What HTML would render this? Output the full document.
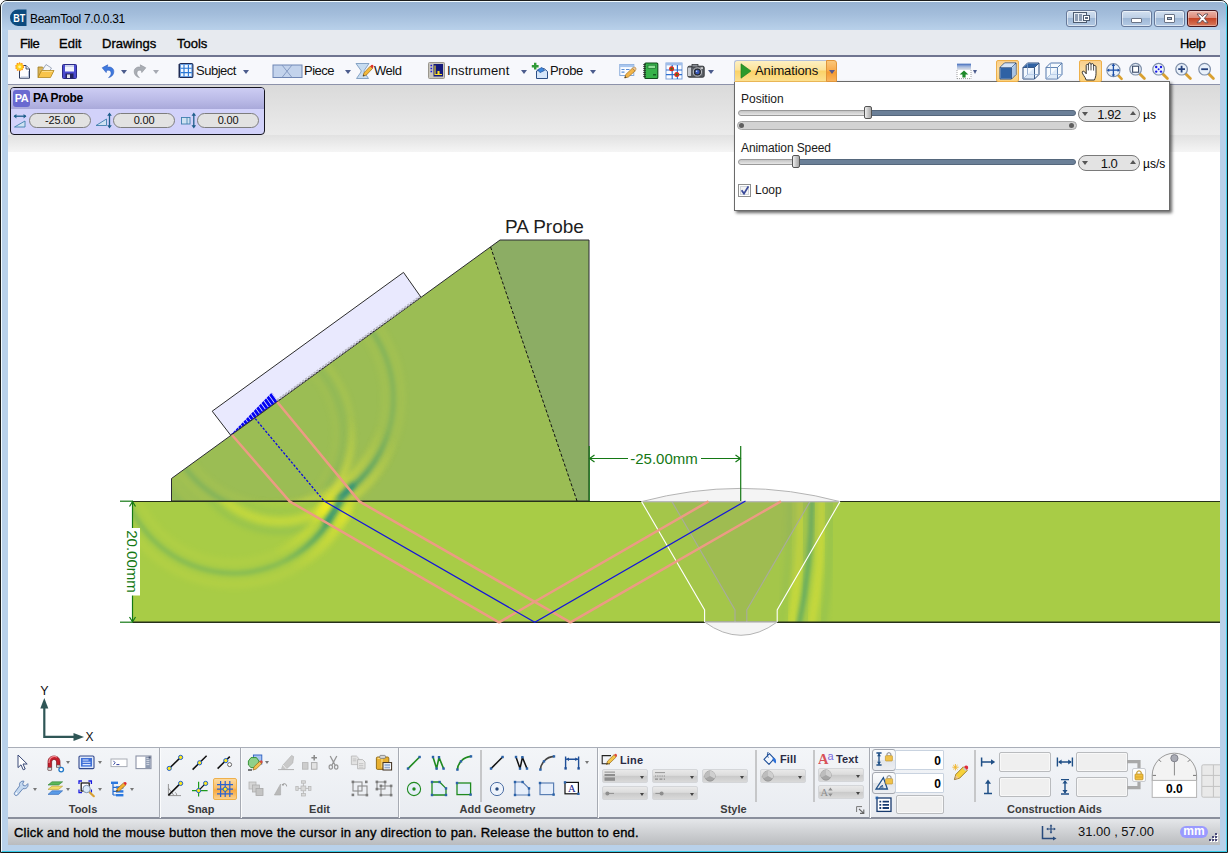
<!DOCTYPE html>
<html><head><meta charset="utf-8"><title>BeamTool 7.0.0.31</title>
<style>
*{box-sizing:border-box;margin:0;padding:0}
html,body{width:1228px;height:853px;overflow:hidden;background:#fff}
body{font-family:"Liberation Sans",sans-serif;font-size:12px;color:#000;position:relative}
.abs{position:absolute}
#frame{left:0;top:0;width:1228px;height:853px;background:#b9d1ea;border:1px solid #1c1c1c;border-radius:7px 7px 0 0;overflow:hidden}
#frame2{left:1px;top:1px;width:1226px;height:851px;border:1px solid #f2fbff;border-right-color:#4ad2ec;border-bottom-color:#35cbe8;border-radius:6px 6px 0 0;background:linear-gradient(#98b3d3 0px,#a3bddb 12px,#bad2eb 29px,#b9d1ea 30px)}
#title{left:30px;top:11px;font-size:12px;letter-spacing:-0.3px;line-height:16px;white-space:nowrap}
#menubar{left:8px;top:30px;width:1212px;height:27px;background:#e7eaef;border-bottom:2px solid #6f7490}
.mi{top:36px;font-size:13px;line-height:16px;-webkit-text-stroke:0.35px #000;white-space:nowrap}
#toolbar{left:8px;top:57px;width:1212px;height:28px;background:#f7f8fc;border-bottom:1px solid #8d92aa}
.tt{top:63px;font-size:13px;line-height:16px;white-space:nowrap;color:#111}
#gray{left:8px;top:85px;width:1212px;height:67px;background:linear-gradient(#dadada 0,#ebebeb 50px,#e1e1e1 50px,#f5f5f5 67px)}
#canvas{left:8px;top:152px;width:1212px;height:595px;background:#fff}
#ribbon{left:8px;top:747px;width:1212px;height:72px;background:linear-gradient(#f3f5f8,#e9ecf1);border-top:1px solid #a9aeb8;border-bottom:2px solid #8a8f9c}
#status{left:8px;top:819px;width:1212px;height:26px;background:linear-gradient(#e5e7ea,#cfd1d4 50%,#babcbf)}
</style></head><body>
<div id="frame" class="abs"></div><div id="frame2" class="abs"></div>
<div id="title" class="abs">BeamTool 7.0.0.31</div>
<div id="menubar" class="abs"></div>
<div class="abs mi" style="left:20px;letter-spacing:-0.4px">File</div>
<div class="abs mi" style="left:59px">Edit</div>
<div class="abs mi" style="left:102px">Drawings</div>
<div class="abs mi" style="left:177px">Tools</div>
<div class="abs mi" style="left:1180px;letter-spacing:-0.3px">Help</div>
<div id="toolbar" class="abs"></div>
<div id="gray" class="abs"></div>
<div id="canvas" class="abs">
<svg class="abs" style="left:0;top:0" width="1212" height="595" viewBox="8 152 1212 595">
<defs>
<filter id="b1" x="-20%" y="-20%" width="140%" height="140%"><feGaussianBlur stdDeviation="2"/></filter>
<filter id="b2" x="-20%" y="-20%" width="140%" height="140%"><feGaussianBlur stdDeviation="3"/></filter>
<filter id="b3" x="-50%" y="-50%" width="200%" height="200%"><feGaussianBlur stdDeviation="4"/></filter>
<clipPath id="cw"><polygon points="171.5,501 171.5,478.5 500,240 589,240 589,501"/></clipPath>
<clipPath id="cp"><rect x="133" y="501" width="1087" height="121"/></clipPath>
<clipPath id="cel"><polygon points="230.5,435 277.6,401 271.8,392.6"/></clipPath>
<radialGradient id="hot" gradientUnits="userSpaceOnUse" cx="338" cy="498" r="85"><stop offset="0" stop-color="#fff"/><stop offset="0.35" stop-color="#fff" stop-opacity="0.75"/><stop offset="1" stop-color="#fff" stop-opacity="0"/></radialGradient>
<mask id="mhot"><rect x="100" y="200" width="600" height="450" fill="url(#hot)"/></mask>
</defs>
<!-- plate -->
<rect x="133" y="501" width="1087" height="121" fill="#a8cc46"/>
<!-- wedge -->
<polygon points="171.5,501 171.5,478.5 500,240 589,240 589,501" fill="#9bbd54"/>
<polygon points="490.6,247 500,240 589,240 589,501 577,501" fill="#8cad64"/>
<!-- WAVES -->
<g clip-path="url(#cw)">
 <g opacity="0.3">
  <circle cx="277.7" cy="398.4" r="115.8" fill="none" stroke="#3f9a72" stroke-width="4" filter="url(#b1)"/>
  <circle cx="277.7" cy="398.4" r="124" fill="none" stroke="#d4dc48" stroke-width="5" filter="url(#b2)" opacity="0.7"/>
  <circle cx="277.7" cy="398.4" r="107.5" fill="none" stroke="#d4dc48" stroke-width="5" filter="url(#b2)" opacity="0.6"/>
  <circle cx="247.6" cy="433.8" r="104.1" fill="none" stroke="#d8de46" stroke-width="5" filter="url(#b2)" opacity="0.9"/>
  <circle cx="247.6" cy="433.8" r="96.5" fill="none" stroke="#5aa270" stroke-width="4" filter="url(#b2)" opacity="0.8"/>
  <circle cx="247.6" cy="433.8" r="88" fill="none" stroke="#d4dc48" stroke-width="4" filter="url(#b2)" opacity="0.5"/>
 </g>
 <g mask="url(#mhot)" opacity="0.7">
  <circle cx="277.7" cy="398.4" r="115.8" fill="none" stroke="#2a9078" stroke-width="4.5" filter="url(#b1)"/>
  <circle cx="277.7" cy="398.4" r="124.5" fill="none" stroke="#e4e63a" stroke-width="5" filter="url(#b2)"/>
  <circle cx="277.7" cy="398.4" r="107" fill="none" stroke="#e4e63a" stroke-width="5" filter="url(#b2)"/>
  <circle cx="247.6" cy="433.8" r="104.1" fill="none" stroke="#e8e838" stroke-width="5" filter="url(#b2)"/>
 </g>
</g>
<g clip-path="url(#cp)">
 <g opacity="0.35">
  <circle cx="233.5" cy="459.5" r="113.7" fill="none" stroke="#3f9a72" stroke-width="4.5" filter="url(#b1)"/>
  <circle cx="233.5" cy="459.5" r="125" fill="none" stroke="#d6de40" stroke-width="7" filter="url(#b2)" opacity="0.75"/>
  <circle cx="233.5" cy="459.5" r="103" fill="none" stroke="#d6de40" stroke-width="6" filter="url(#b2)" opacity="0.6"/>
  <circle cx="279.7" cy="439.6" r="91.5" fill="none" stroke="#5aa66c" stroke-width="5" filter="url(#b2)" opacity="0.8"/>
  <circle cx="279.7" cy="439.6" r="72" fill="none" stroke="#5aa66c" stroke-width="5" filter="url(#b2)" opacity="0.5"/>
 </g>
 <g mask="url(#mhot)" opacity="0.7">
  <circle cx="233.5" cy="459.5" r="113.7" fill="none" stroke="#1f8a7c" stroke-width="5.5" filter="url(#b1)"/>
  <circle cx="233.5" cy="459.5" r="124" fill="none" stroke="#f0ec2c" stroke-width="7" filter="url(#b2)"/>
  <circle cx="233.5" cy="459.5" r="103" fill="none" stroke="#f2ee28" stroke-width="7" filter="url(#b2)"/>
 </g>
 <circle cx="279.7" cy="439.6" r="82" fill="none" stroke="#e2e636" stroke-width="7" filter="url(#b2)" opacity="0.55"/>
 <!-- right side reflected front -->
 <g>
  <path d="M812,498 Q812,562 798.5,626" fill="none" stroke="#4a9e6c" stroke-width="5" filter="url(#b1)" opacity="0.75"/>
  <path d="M800.5,498 Q802,562 790.5,626" fill="none" stroke="#dde234" stroke-width="6" filter="url(#b2)" opacity="0.8"/>
  <path d="M822,498 Q823,562 811,626" fill="none" stroke="#dde234" stroke-width="6" filter="url(#b2)" opacity="0.8"/>
  <path d="M831,498 Q832,562 823,626" fill="none" stroke="#6aae60" stroke-width="4" filter="url(#b2)" opacity="0.45"/>
  <path d="M790,498 Q790,562 781,626" fill="none" stroke="#6aae60" stroke-width="4" filter="url(#b2)" opacity="0.3"/>
 </g>
</g>
<g>
 <ellipse cx="328" cy="506" rx="6" ry="13" transform="rotate(38 328 506)" fill="#f6ee1c" filter="url(#b3)" opacity="0.85"/>
 <ellipse cx="343" cy="517" rx="4" ry="10" transform="rotate(38 343 517)" fill="#f0ea24" filter="url(#b3)" opacity="0.55"/>
 <path d="M354,484 Q343,496 337,505 Q331,514 325,524" fill="none" stroke="#1c8a82" stroke-width="5" filter="url(#b1)" opacity="0.7"/>
</g>

<polygon points="171.5,501 171.5,478.5 500,240 589,240 589,501" fill="none" stroke="#2b2b33" stroke-width="1"/>
<line x1="490.6" y1="247" x2="577" y2="501" stroke="#111" stroke-width="1" stroke-dasharray="3.2,2"/>
<line x1="133" y1="501.5" x2="1220" y2="501.5" stroke="#26301a" stroke-width="1.2"/>
<line x1="133" y1="622.3" x2="1220" y2="622.3" stroke="#26301a" stroke-width="1.4"/>
<!-- probe -->
<polygon points="403.5,272.4 420.9,297.1 230.5,435 212.2,411.2" fill="#e9e9fe" stroke="#2b2b2b" stroke-width="1"/>
<line x1="277" y1="400.2" x2="420" y2="296.6" stroke="#b9b9c4" stroke-width="2.2" stroke-dasharray="2.4,1.1"/>
<g clip-path="url(#cel)"><line x1="230.5" y1="435" x2="279" y2="399.9" stroke="#0404f4" stroke-width="30" stroke-dasharray="2.85,0.8"/></g>
<!-- weld -->
<path d="M641.6,501.6 Q741,475.2 840,501.6 Z" fill="#f4f4f4" stroke="#b4b4b4" stroke-width="1"/>
<path d="M704.6,622 Q741,648.6 777.2,622 Z" fill="#f4f4f4" stroke="#b4b4b4" stroke-width="1"/>
<polygon points="641.6,501.6 840,501.6 777.2,610 777.2,622 704.6,622 704.6,610" fill="#8c9c6c" fill-opacity="0.12"/>
<polygon points="672,501.6 810,501.6 746.8,610 746.8,622 735,622 735,610" fill="#8c9c6c" fill-opacity="0.22"/>
<polyline points="641.6,501.6 704.6,610 704.6,622" fill="none" stroke="#fff" stroke-width="1.1"/>
<polyline points="840,501.6 777.2,610 777.2,622" fill="none" stroke="#fff" stroke-width="1.1"/>
<polyline points="672,501.6 735,610 735,622" fill="none" stroke="#a9ab9e" stroke-width="1.1"/>
<polyline points="810,501.6 746.8,610 746.8,622" fill="none" stroke="#a9ab9e" stroke-width="1.1"/>
<line x1="643" y1="501.6" x2="839" y2="501.6" stroke="#b8b8b8" stroke-width="1.2"/>
<line x1="705" y1="622" x2="777" y2="622" stroke="#c4c4c4" stroke-width="1.2"/>
<!-- rays -->
<g fill="none" stroke="#ec9b84" stroke-width="2.5" stroke-linejoin="round">
<polyline points="232,435 289.6,501.4 499,622.3 708.5,501.4"/>
<polyline points="277.3,402 359.3,501.4 570.4,622.3 781,501.4"/>
</g>
<line x1="255.2" y1="418.6" x2="324" y2="501" stroke="#0a0ae0" stroke-width="1.3" stroke-dasharray="2.4,1.6"/>
<polyline points="324,501 534.8,622.3 745.5,501" fill="none" stroke="#1414dc" stroke-width="1.2"/>
<!-- dims -->
<g stroke="#147814" stroke-width="1.2" fill="none">
<line x1="589.2" y1="446" x2="589.2" y2="501"/><line x1="740.7" y1="446" x2="740.7" y2="501"/>
<line x1="589.5" y1="458.5" x2="628" y2="458.5"/><line x1="701" y1="458.5" x2="740.5" y2="458.5"/>
<polyline points="594.5,455 589.6,458.5 594.5,462"/><polyline points="735.5,455 740.4,458.5 735.5,462"/>
<line x1="120" y1="501.2" x2="133" y2="501.2"/><line x1="120" y1="622.2" x2="133" y2="622.2"/>
<line x1="132.5" y1="501" x2="132.5" y2="622"/>
<polyline points="129.5,506.5 132.5,501.6 135.5,506.5"/><polyline points="129.5,617 132.5,621.9 135.5,617"/>
</g>
<rect x="125" y="528" width="15" height="67.5" fill="#fff"/>
<text x="664" y="463.6" font-size="15" fill="#147814" text-anchor="middle" font-family="Liberation Sans, sans-serif">-25.00mm</text>
<text transform="translate(126.6,561.5) rotate(90)" font-size="15" fill="#147814" text-anchor="middle" font-family="Liberation Sans, sans-serif">20.00mm</text>
<text x="505" y="232.6" font-size="19" fill="#1e1e1e" font-family="Liberation Sans, sans-serif">PA Probe</text>
<!-- axes -->
<g stroke="#2f5656" stroke-width="2.2" fill="none"><polyline points="44.3,706 44.3,736.9 76,736.9"/></g>
<polygon points="44.3,698 48.3,708.5 40.3,708.5" fill="#2f5656"/><polygon points="84,736.9 73.5,732.9 73.5,740.9" fill="#2f5656"/>
<text x="44.5" y="695" font-size="12.5" text-anchor="middle" fill="#111" font-family="Liberation Sans, sans-serif">Y</text>
<text x="85.6" y="741" font-size="12" fill="#111" font-family="Liberation Sans, sans-serif">X</text>
</svg>

</div>
<div id="ribbon" class="abs"></div>
<div id="status" class="abs"></div>
<!-- probe panel -->
<div class="abs" style="left:10px;top:87px;width:255px;height:48px;border:1px solid #15151f;border-radius:4px;background:#d2d2fa;overflow:hidden"><div style="height:21px;background:linear-gradient(#cdcdf3,#b9b9e6 60%,#a9a9da)"></div></div>
<div class="abs" style="left:13px;top:90px;width:17px;height:17px;border-radius:3px;background:#6a6ad0;color:#fff;font-weight:bold;font-size:11px;line-height:17px;text-align:center;letter-spacing:-0.6px">PA</div>
<div class="abs" style="left:33px;top:91px;font-size:12px;font-weight:bold;line-height:15px;white-space:nowrap;color:#000;letter-spacing:-0.35px" id="paprobe">PA Probe</div>
<style>.pill{top:113px;height:15px;width:62px;border:1px solid #7d7d7d;border-radius:8px;background:#e2e2e2;font-size:11px;line-height:13px;text-align:center;color:#111;letter-spacing:-0.2px}</style>
<svg class="abs" style="left:13px;top:113px" width="15" height="15" viewBox="0 0 15 15"><path d="M1,3.2 H13" stroke="#1f5f8c" stroke-width="1.3"/><path d="M0.6,3.2 L3.4,1 V5.4Z M13.4,3.2 L10.6,1 V5.4Z" fill="#1f5f8c"/><path d="M1.5,14 L12,14 L12,8Z" fill="#cfe2f2" stroke="#3f7fae" stroke-width="0.9"/></svg>
<div class="abs pill" style="left:29px">-25.00</div>
<svg class="abs" style="left:95px;top:112px" width="18" height="17" viewBox="0 0 18 17"><path d="M1,13.5 L11.5,13.5 L11.5,7Z" fill="#cfe2f2" stroke="#3f7fae" stroke-width="0.9"/><path d="M14.5,2 V15" stroke="#1f5f8c" stroke-width="1.3"/><path d="M14.5,0.6 L12.2,3.8 H16.8Z M14.5,16.4 L12.2,13.2 H16.8Z" fill="#1f5f8c"/></svg>
<div class="abs pill" style="left:113px">0.00</div>
<svg class="abs" style="left:180px;top:112px" width="18" height="17" viewBox="0 0 18 17"><rect x="1.5" y="5.5" width="8.5" height="6.5" fill="#cfe2f2" stroke="#3f7fae" stroke-width="0.9"/><path d="M7,5.5 V12" stroke="#3f7fae" stroke-width="0.8"/><path d="M13.8,2 V15" stroke="#1f5f8c" stroke-width="1.3"/><path d="M13.8,0.6 L11.5,3.8 H16.1Z M13.8,16.4 L11.5,13.2 H16.1Z" fill="#1f5f8c"/></svg>
<div class="abs pill" style="left:197px">0.00</div>
<!-- popup -->
<div class="abs" style="left:734px;top:81px;width:436px;height:130px;background:#fff;border:1px solid #6a6a6a;box-shadow:2px 2px 3px rgba(0,0,0,.6)"></div>
<div class="abs" style="left:735px;top:80px;width:91px;height:2px;background:#fff"></div>
<div class="abs" style="left:741px;top:92px;font-size:12px;line-height:14px;color:#1a1a1a;white-space:nowrap" id="lpos">Position</div>
<style>.trk{height:6px;border-radius:3px}.trkl{background:linear-gradient(#c4c4c4,#e6e6e6);border:1px solid #9a9a9a}.trkd{background:#6b8098;border:1px solid #55677c}
.thumb{width:8px;height:13px;border:1px solid #555;border-radius:2px;background:linear-gradient(90deg,#f0f0f0,#c8c8c8 50%,#a8a8a8)}
.spin{width:62px;height:16px;border:1px solid #7a7a7a;border-radius:8px;background:#e3e3e3;font-size:13px;line-height:16px;text-align:center;color:#111;letter-spacing:-0.5px}
.sdn{width:0;height:0;border-left:3px solid transparent;border-right:3px solid transparent;border-top:4px solid #555}
.sup{width:0;height:0;border-left:3px solid transparent;border-right:3px solid transparent;border-bottom:4px solid #555}</style>
<div class="abs trk trkl" style="left:738px;top:110px;width:133px"></div>
<div class="abs trk trkd" style="left:869px;top:110px;width:207px"></div>
<div class="abs thumb" style="left:864px;top:106px"></div>
<div class="abs spin" style="left:1078px;top:106px">1.92</div>
<div class="abs sdn" style="left:1082px;top:112px"></div><div class="abs sup" style="left:1130px;top:111px"></div>
<div class="abs" style="left:1143px;top:108px;font-size:12px;line-height:14px;white-space:nowrap">µs</div>
<div class="abs" style="left:737px;top:121px;width:340px;height:9px;border:1px solid #a6a6a6;border-radius:5px;background:#d3d3d3"></div>
<div class="abs" style="left:739px;top:123px;width:5px;height:5px;border-radius:3px;background:#5f5f5f"></div>
<div class="abs" style="left:1069px;top:123px;width:5px;height:5px;border-radius:3px;background:#5f5f5f"></div>
<div class="abs" style="left:741px;top:141px;font-size:12px;line-height:14px;color:#1a1a1a;white-space:nowrap;letter-spacing:-0.1px" id="lspd">Animation Speed</div>
<div class="abs trk trkl" style="left:738px;top:159px;width:60px"></div>
<div class="abs trk trkd" style="left:797px;top:159px;width:279px"></div>
<div class="abs thumb" style="left:792px;top:155px"></div>
<div class="abs spin" style="left:1078px;top:155px">1.0</div>
<div class="abs sdn" style="left:1082px;top:161px"></div><div class="abs sup" style="left:1130px;top:160px"></div>
<div class="abs" style="left:1143px;top:157px;font-size:12px;line-height:14px;white-space:nowrap">µs/s</div>
<div class="abs" style="left:738px;top:184px;width:13px;height:13px;border:1px solid #8e8f8f;background:#f4f4f4;box-shadow:inset 0 0 0 1px #fff, inset 0 0 0 2px #cfd4da"></div>
<svg class="abs" style="left:740px;top:185px" width="10" height="11" viewBox="0 0 10 11"><path d="M1.6,5.2 L4,8.6 L8.4,1.4" stroke="#3a4a9a" stroke-width="1.8" fill="none"/></svg>
<div class="abs" style="left:755px;top:183px;font-size:12px;line-height:14px;color:#1a1a1a;white-space:nowrap">Loop</div>
<!-- status -->
<div class="abs" style="left:14px;top:825px;font-size:13px;line-height:16px;white-space:nowrap;-webkit-text-stroke:0.35px #000;letter-spacing:0.22px" id="stat">Click and hold the mouse button then move the cursor in any direction to pan. Release the button to end.</div>
<svg class="abs" style="left:1039px;top:823px" width="19" height="19" viewBox="0 0 19 19"><path d="M3.5,3 V15.5 H15" stroke="#274a7c" stroke-width="1.5" fill="none"/><path d="M17.5,15.5 L14,13.6 V17.4Z" fill="#274a7c"/><path d="M12,3 V9 M9,6 H15" stroke="#274a7c" stroke-width="1.2"/><path d="M12,1.2 L13.4,3.2 H10.6Z M12,10.8 L13.4,8.8 H10.6Z M7.2,6 L9.2,4.6 V7.4Z M16.8,6 L14.8,4.6 V7.4Z" fill="#274a7c"/></svg>
<div class="abs" style="left:1078px;top:824px;font-size:13px;line-height:16px;white-space:nowrap;color:#111" id="coord">31.00 , 57.00</div>
<div class="abs" style="left:1180px;top:826px;width:28px;height:12px;border-radius:6px;background:#9a9aff;color:#fff;font-weight:bold;font-size:12px;line-height:10.5px;text-align:center">mm</div>
<svg class="abs" style="left:1207px;top:832px" width="12" height="12" viewBox="0 0 12 12"><g fill="#fff"><rect x="9" y="2" width="2" height="2"/><rect x="6" y="5" width="2" height="2"/><rect x="9" y="5" width="2" height="2"/><rect x="3" y="8" width="2" height="2"/><rect x="6" y="8" width="2" height="2"/><rect x="9" y="8" width="2" height="2"/></g><g fill="#4a4a7a"><rect x="8" y="1" width="2" height="2"/><rect x="5" y="4" width="2" height="2"/><rect x="8" y="4" width="2" height="2"/><rect x="2" y="7" width="2" height="2"/><rect x="5" y="7" width="2" height="2"/><rect x="8" y="7" width="2" height="2"/></g></svg>
<style>.rsel{border:1px solid #eeb04a;border-radius:2px;background:linear-gradient(#fbd9a0,#f9bf6c 45%,#f7a840 55%,#fbd08a)}</style>
<div class="abs " style="left:159px;top:748px;width:1px;height:70px;background:#a7abb3"></div>
<div class="abs " style="left:160px;top:748px;width:1px;height:70px;background:#fbfcfd"></div>
<div class="abs " style="left:240px;top:748px;width:1px;height:70px;background:#a7abb3"></div>
<div class="abs " style="left:241px;top:748px;width:1px;height:70px;background:#fbfcfd"></div>
<div class="abs " style="left:398px;top:748px;width:1px;height:70px;background:#a7abb3"></div>
<div class="abs " style="left:399px;top:748px;width:1px;height:70px;background:#fbfcfd"></div>
<div class="abs " style="left:597px;top:748px;width:1px;height:70px;background:#a7abb3"></div>
<div class="abs " style="left:598px;top:748px;width:1px;height:70px;background:#fbfcfd"></div>
<div class="abs " style="left:869px;top:748px;width:1px;height:70px;background:#a7abb3"></div>
<div class="abs " style="left:870px;top:748px;width:1px;height:70px;background:#fbfcfd"></div>
<div class="abs " style="left:480px;top:750px;width:2px;height:52px;background:#c6c7c9"></div>
<div class="abs " style="left:755px;top:750px;width:2px;height:52px;background:#c6c7c9"></div>
<div class="abs " style="left:813px;top:750px;width:2px;height:52px;background:#c6c7c9"></div>
<div class="abs " style="left:974px;top:750px;width:2px;height:52px;background:#c6c7c9"></div>
<div class="abs " id="lb1" style="left:23px;top:802px;width:120px;text-align:center;font-size:11px;font-weight:bold;line-height:14px;color:#3c3c3c;white-space:nowrap">Tools</div>
<div class="abs " id="lb2" style="left:141px;top:802px;width:120px;text-align:center;font-size:11px;font-weight:bold;line-height:14px;color:#3c3c3c;white-space:nowrap">Snap</div>
<div class="abs " id="lb3" style="left:259.5px;top:802px;width:120px;text-align:center;font-size:11px;font-weight:bold;line-height:14px;color:#3c3c3c;white-space:nowrap">Edit</div>
<div class="abs " id="lb4" style="left:437.5px;top:802px;width:120px;text-align:center;font-size:11px;font-weight:bold;line-height:14px;color:#3c3c3c;white-space:nowrap">Add Geometry</div>
<div class="abs " id="lb5" style="left:673.5px;top:802px;width:120px;text-align:center;font-size:11px;font-weight:bold;line-height:14px;color:#3c3c3c;white-space:nowrap">Style</div>
<div class="abs " id="lb6" style="left:994.5px;top:802px;width:120px;text-align:center;font-size:11px;font-weight:bold;line-height:14px;color:#3c3c3c;white-space:nowrap">Construction Aids</div>
<svg class="abs" style="left:17px;top:754px" width="12" height="17" viewBox="0 0 12 17"><path d="M1,1 V13.6 L4,10.8 L6.2,15.8 L8.2,15 L6,10 H10.2Z" fill="#fff" stroke="#3a4a78" stroke-width="1"/></svg>
<svg class="abs" style="left:46px;top:754px" width="19" height="19" viewBox="0 0 19 19"><path d="M2,16 V8 C2,0 14,0 14,8 V13 H10.6 V8 C10.6,4.6 5.6,4.6 5.6,8 V16Z" fill="#c41e2c" stroke="#7a0f18" stroke-width="0.7"/><path d="M3,9 C3,2 9,1.6 11,3.4" stroke="#f08a90" stroke-width="1.2" fill="none"/><rect x="2" y="13.6" width="3.6" height="2.6" fill="#d8d8d8" stroke="#555" stroke-width="0.5"/><rect x="10.6" y="11" width="3.4" height="2.2" fill="#d8d8d8" stroke="#555" stroke-width="0.5"/><circle cx="15.2" cy="15.6" r="2.3" fill="#fff" stroke="#1f78c8" stroke-width="1.3"/></svg>
<div class="abs" style="left:65.5px;top:761px;width:0;height:0;border-left:2.5px solid transparent;border-right:2.5px solid transparent;border-top:3.5px solid #777"></div>
<svg class="abs" style="left:78px;top:755px" width="17" height="15" viewBox="0 0 17 15"><rect x="1" y="1" width="15" height="12.6" rx="1.2" fill="#dfe9fb" stroke="#33498c" stroke-width="1.1"/><rect x="3" y="3" width="11" height="8.6" fill="#3f6fd8"/><path d="M4.6,5 H10.5 M4.6,7.3 H12.4 M4.6,9.6 H12.4" stroke="#dfe9ff" stroke-width="1.1"/></svg>
<div class="abs" style="left:97.5px;top:761px;width:0;height:0;border-left:2.5px solid transparent;border-right:2.5px solid transparent;border-top:3.5px solid #777"></div>
<svg class="abs" style="left:110px;top:758px" width="18" height="10" viewBox="0 0 18 10"><rect x="1" y="1" width="16" height="7.6" fill="#fff" stroke="#a9adb6" stroke-width="1"/><path d="M3.4,2.8 L5.2,4.8 L3.4,6.8" stroke="#2a3a9a" stroke-width="0.9" fill="none"/><path d="M6.4,6.6 H9.4" stroke="#2a3a9a" stroke-width="1"/></svg>
<svg class="abs" style="left:135px;top:755px" width="17" height="15" viewBox="0 0 17 15"><rect x="1" y="1" width="15" height="12.6" fill="#fff" stroke="#8c93a6" stroke-width="1.1"/><rect x="10.4" y="1.5" width="5.2" height="11.6" fill="#8f9bb2"/><path d="M11.4,3.6 h3 M11.4,5.6 h3 M11.4,7.6 h3 M11.4,9.6 h3" stroke="#e6e9f0" stroke-width="0.8"/><rect x="13.6" y="1.5" width="2" height="2" fill="#55607a"/></svg>
<svg class="abs" style="left:13px;top:780px" width="18" height="17" viewBox="0 0 18 17"><path d="M11,1.2 C8.2,0.6 5.8,2.8 6.6,5.8 L1.6,12.6 C0.4,14.6 2.8,16.6 4.6,15 L10,8.6 C13.4,9.4 15.8,6.6 14.8,3.6 L12.4,6 L10.2,5.4 L9.8,3.4Z" fill="#c5d9f0" stroke="#5d7eb0" stroke-width="0.9" stroke-linejoin="round"/><circle cx="3.4" cy="13.4" r="0.9" fill="#fff"/></svg>
<div class="abs" style="left:33px;top:788px;width:0;height:0;border-left:2.5px solid transparent;border-right:2.5px solid transparent;border-top:3.5px solid #777"></div>
<svg class="abs" style="left:47px;top:781px" width="17" height="15" viewBox="0 0 17 15"><path d="M5,0.8 H15.6 L11.6,4 H1Z" fill="#5cb85a" stroke="#2e7d32" stroke-width="0.6"/><path d="M5,5.2 H15.6 L11.6,8.4 H1Z" fill="#f4dc6a" stroke="#b89a22" stroke-width="0.6"/><path d="M5,9.8 H15.6 L11.6,13.4 H1Z" fill="#5a9be8" stroke="#2a62b4" stroke-width="0.6"/></svg>
<div class="abs" style="left:65.5px;top:788px;width:0;height:0;border-left:2.5px solid transparent;border-right:2.5px solid transparent;border-top:3.5px solid #777"></div>
<svg class="abs" style="left:78px;top:780px" width="18" height="18" viewBox="0 0 18 18"><path d="M1,4 V1 H4 M10.4,1 H13.4 V4 M13.4,9.6 V12.6 M4,12.6 H1 V9.6" stroke="#1a1ae0" stroke-width="1.3" fill="none"/><rect x="3.2" y="3" width="8" height="8" fill="#fff" stroke="#111" stroke-width="1.2"/><path d="M11.6,12.2 L15.8,16.2" stroke="#d9a030" stroke-width="2.2" stroke-linecap="round"/><circle cx="8.6" cy="9" r="3.7" fill="#dcebfa" stroke="#8194b0" stroke-width="1"/></svg>
<div class="abs" style="left:97.5px;top:788px;width:0;height:0;border-left:2.5px solid transparent;border-right:2.5px solid transparent;border-top:3.5px solid #777"></div>
<svg class="abs" style="left:110px;top:781px" width="18" height="17" viewBox="0 0 18 17"><path d="M3,1 V14 M3,6.4 H6 M3,10.4 H6 M3,14 H6" stroke="#1f68d0" stroke-width="1.2" fill="none"/><rect x="1" y="0.6" width="7" height="2.4" fill="#2a78e0"/><rect x="6" y="5.2" width="7.4" height="2.4" fill="#2a78e0"/><rect x="6" y="9.2" width="7.4" height="2.4" fill="#2a78e0"/><rect x="6" y="13" width="7.4" height="2.4" fill="#2a78e0"/><path d="M6.4,10.6 L7.4,7.6 L13.4,2 L15.6,4.2 L9.6,9.8Z" fill="#f3b030" stroke="#8a5a10" stroke-width="0.6"/><path d="M13.4,2 L14.6,1 Q16,0.8 16.6,2 Q16.8,3.2 15.6,4.2Z" fill="#e0282a"/><path d="M6.4,10.6 L6.9,9 L8,10Z" fill="#222"/></svg>
<div class="abs" style="left:129.5px;top:788px;width:0;height:0;border-left:2.5px solid transparent;border-right:2.5px solid transparent;border-top:3.5px solid #777"></div>
<svg class="abs" style="left:166px;top:754px" width="18" height="18" viewBox="0 0 18 18"><path d="M3,14.6 L14.6,3.4" stroke="#111" stroke-width="1.5"/><circle cx="3.2" cy="14.4" r="2.1" fill="#ffe81a" stroke="#1f5fd0" stroke-width="1"/><circle cx="14.6" cy="3.4" r="2.1" fill="#ffe81a" stroke="#1f5fd0" stroke-width="1"/></svg>
<svg class="abs" style="left:191px;top:754px" width="18" height="18" viewBox="0 0 18 18"><path d="M1.6,15.6 L15.6,1.8" stroke="#111" stroke-width="1.5"/><circle cx="8.6" cy="8.8" r="2.1" fill="#ffe81a" stroke="#1f5fd0" stroke-width="1"/></svg>
<svg class="abs" style="left:216px;top:754px" width="18" height="18" viewBox="0 0 18 18"><path d="M1.6,14.6 L13.8,2.6" stroke="#111" stroke-width="1.5"/><circle cx="9.8" cy="6.6" r="2.1" fill="#ffe81a" stroke="#1f5fd0" stroke-width="1"/><circle cx="13.6" cy="10.6" r="2" fill="#fff" stroke="#555" stroke-width="0.9"/></svg>
<svg class="abs" style="left:166px;top:780px" width="18" height="18" viewBox="0 0 18 18"><path d="M2.4,4 V15.6 H15 M2.4,8 L8,15.6 M9.4,12.4 Q10.8,13.6 10.8,15.6" stroke="#8a8a8a" stroke-width="0.9" fill="none"/><path d="M2.4,15.4 L14.4,3.4" stroke="#111" stroke-width="1.5"/><circle cx="14.6" cy="3.4" r="2.1" fill="#ffe81a" stroke="#1f5fd0" stroke-width="1"/></svg>
<svg class="abs" style="left:191px;top:780px" width="18" height="18" viewBox="0 0 18 18"><path d="M7.6,1.8 V16.6 M1,10.6 H16.6" stroke="#1c9a1c" stroke-width="1.2"/><path d="M7.6,10.6 L14.6,3.4" stroke="#111" stroke-width="1.3"/><circle cx="7.6" cy="10.6" r="2.1" fill="#ffe81a" stroke="#1f5fd0" stroke-width="1"/><circle cx="14.6" cy="3.4" r="2.1" fill="#ffe81a" stroke="#1f5fd0" stroke-width="1"/></svg>
<div class="abs rsel" style="left:213px;top:778px;width:24px;height:22px"></div>
<svg class="abs" style="left:216px;top:780px" width="18" height="18" viewBox="0 0 18 18"><path d="M4.6,1 V17 M9.2,1 V17 M13.8,1 V17 M1,4.6 H17 M1,9.2 H17 M1,13.8 H17" stroke="#2a62d0" stroke-width="1.2"/><circle cx="9.2" cy="9.2" r="2.1" fill="#ffe81a" stroke="#1f5fd0" stroke-width="1"/></svg>
<svg class="abs" style="left:247px;top:754px" width="17" height="18" viewBox="0 0 17 18"><rect x="6.4" y="1" width="8.4" height="9" fill="#a9c4f2" stroke="#2a5fc0" stroke-width="0.9"/><path d="M4,3.6 H9.4 L12,7 V11 L9.4,13.6 H4 L1.4,11 V7Z" fill="#8fd08a" stroke="#2a8a2a" stroke-width="0.9"/><path d="M1,16 H5" stroke="#111" stroke-width="1.1"/><path d="M6,16 L7,12.8 L12.6,7.4 L14.8,9.6 L9.2,15Z" fill="#f3c050" stroke="#8a5a10" stroke-width="0.6"/><path d="M12.6,7.4 L13.6,6.4 Q15,6.2 15.6,7.4 Q15.8,8.6 14.8,9.6Z" fill="#d84a3a"/></svg>
<div class="abs" style="left:264.5px;top:761px;width:0;height:0;border-left:2.5px solid transparent;border-right:2.5px solid transparent;border-top:3.5px solid #777"></div>
<svg class="abs" style="left:277px;top:754px" width="18" height="18" viewBox="0 0 18 18"><path d="M1,15.6 H17" stroke="#b0b0b0" stroke-width="1"/><path d="M4.6,14.6 L6,11 L14.6,1.4 L16.6,2.6 L15.8,9 L9.4,15Z" fill="#c9c9c9" stroke="#b0b0b0" stroke-width="0.6"/><path d="M6,11 L9.4,15" stroke="#eee" stroke-width="1"/></svg>
<svg class="abs" style="left:301px;top:754px" width="18" height="17" viewBox="0 0 18 17"><rect x="1.4" y="8.6" width="5.6" height="6.6" fill="#cdcdcd" stroke="#b4b4b4" stroke-width="0.8"/><rect x="10.4" y="8.6" width="5.6" height="6.6" fill="#e2e2e2" stroke="#a8a8a8" stroke-width="0.9"/><path d="M13.2,1 V6.6 M10.4,3.8 H16" stroke="#8a8a8a" stroke-width="1.5"/></svg>
<svg class="abs" style="left:328px;top:755px" width="11" height="15" viewBox="0 0 11 15"><path d="M2.2,1 L7,10 M8.8,1 L4,10" stroke="#969696" stroke-width="1.3"/><ellipse cx="2.8" cy="12" rx="1.7" ry="2.2" fill="none" stroke="#969696" stroke-width="1.2"/><ellipse cx="8.2" cy="12" rx="1.7" ry="2.2" fill="none" stroke="#969696" stroke-width="1.2"/></svg>
<svg class="abs" style="left:350px;top:755px" width="17" height="15" viewBox="0 0 17 15"><path d="M1.4,1 H6.4 L8.8,3.4 V9.6 H1.4Z" fill="#e2e2e2" stroke="#b8b8b8" stroke-width="0.8"/><path d="M7.6,4.6 H12.6 L15,7 V13.8 H7.6Z" fill="#e8e8e8" stroke="#b0b0b0" stroke-width="0.8"/><path d="M9,8.6 h4.4 M9,10.4 h4.4 M9,12.2 h4.4 M2.8,4 h3.4 M2.8,5.8 h3.4" stroke="#b8b8b8" stroke-width="0.7"/></svg>
<svg class="abs" style="left:375px;top:754px" width="18" height="18" viewBox="0 0 18 18"><rect x="1.4" y="3" width="12.4" height="12.4" rx="1.2" fill="#e8b030" stroke="#8a6410" stroke-width="0.9"/><path d="M2.6,4.4 H7 V13.6" stroke="#f8dc8a" stroke-width="1.2" fill="none"/><rect x="4.8" y="1.4" width="5.6" height="3" rx="0.8" fill="#d8d8d8" stroke="#6a6a6a" stroke-width="0.7"/><rect x="8" y="8.6" width="8.6" height="7.4" fill="#fff" stroke="#3a2a1a" stroke-width="1"/><rect x="9.4" y="10" width="5.8" height="2.4" fill="#9fb8dc"/><path d="M9.4,13.8 h5.6" stroke="#5a7ab0" stroke-width="0.9"/></svg>
<svg class="abs" style="left:248px;top:781px" width="17" height="16" viewBox="0 0 17 16"><rect x="1" y="1" width="7" height="7" fill="#d6d6d6" stroke="#b4b4b4" stroke-width="0.8"/><rect x="4.4" y="4" width="7" height="7" fill="#cccccc" stroke="#aeaeae" stroke-width="0.8"/><rect x="8" y="7.4" width="7" height="7" fill="#c4c4c4" stroke="#a8a8a8" stroke-width="0.8"/></svg>
<svg class="abs" style="left:273px;top:780px" width="16" height="17" viewBox="0 0 16 17"><path d="M1.4,15 L7.6,4 V15Z" fill="#b9b9b9" stroke="#a9a9a9" stroke-width="0.6"/><path d="M9.6,5.4 C10,3 13.6,3 13.6,6.4" stroke="#9a9a9a" stroke-width="1" fill="none"/><path d="M8.6,4.2 L11,3.6 L10.4,6Z" fill="#9a9a9a"/></svg>
<svg class="abs" style="left:295px;top:780px" width="17" height="17" viewBox="0 0 17 17"><path d="M8.4,2 V15 M2,8.4 H15" stroke="#bcbcbc" stroke-width="1"/><g fill="#d9d9d9" stroke="#b4b4b4" stroke-width="0.7"><rect x="6.4" y="0.8" width="4" height="2.4"/><rect x="6.4" y="13.6" width="4" height="2.4"/><rect x="0.8" y="6.4" width="2.4" height="4"/><rect x="13.6" y="6.4" width="2.4" height="4"/><rect x="6" y="6" width="4.8" height="4.8"/></g></svg>
<svg class="abs" style="left:351px;top:780px" width="18" height="17" viewBox="0 0 18 17"><rect x="2" y="2" width="9" height="9" fill="none" stroke="#8c8c8c" stroke-width="1.1"/><rect x="7" y="6" width="9" height="9" fill="none" stroke="#8c8c8c" stroke-width="1.1"/><g fill="#7c7c7c"><rect x="0.6" y="0.6" width="2.6" height="2.6"/><rect x="14" y="0.6" width="2.6" height="2.6"/><rect x="0.6" y="13.6" width="2.6" height="2.6"/><rect x="14.6" y="13.8" width="2.6" height="2.6"/></g></svg>
<svg class="abs" style="left:375px;top:780px" width="18" height="17" viewBox="0 0 18 17"><rect x="2" y="2" width="8" height="7" fill="none" stroke="#8c8c8c" stroke-width="1.1"/><rect x="6" y="6" width="10" height="9" fill="none" stroke="#8c8c8c" stroke-width="1.1"/><g fill="#7c7c7c"><rect x="0.6" y="0.6" width="2.6" height="2.6"/><rect x="8.8" y="0.6" width="2.6" height="2.6"/><rect x="0.6" y="7.8" width="2.6" height="2.6"/><rect x="4.6" y="4.6" width="2.6" height="2.6"/><rect x="14.8" y="4.6" width="2.6" height="2.6"/><rect x="4.6" y="13.8" width="2.6" height="2.6"/><rect x="14.8" y="13.8" width="2.6" height="2.6"/></g></svg>
<svg class="abs" style="left:406px;top:755px" width="16" height="16" viewBox="0 0 16 16"><path d="M2,13.6 L13.6,2" stroke="#1f8a1f" stroke-width="1.6"/><rect x="0.8" y="12.4" width="2.4" height="2.4" fill="#2a62a8"/><rect x="12.4" y="0.8" width="2.4" height="2.4" fill="#2a62a8"/></svg>
<svg class="abs" style="left:431px;top:755px" width="16" height="16" viewBox="0 0 16 16"><path d="M2,2 L5.6,13.6 L8,2.4 L12.6,13.6" stroke="#1f8a1f" stroke-width="1.6" fill="none" stroke-linejoin="round"/><path d="M8,2.4 L12.6,13.6" stroke="#1f8a1f" stroke-width="0"/><rect x="0.8" y="0.8" width="2.4" height="2.4" fill="#2a62a8"/><rect x="6.8" y="1.0000000000000002" width="2.4" height="2.4" fill="#2a62a8"/><rect x="4.3999999999999995" y="12.4" width="2.4" height="2.4" fill="#2a62a8"/><rect x="11.4" y="12.4" width="2.4" height="2.4" fill="#2a62a8"/></svg>
<svg class="abs" style="left:455px;top:754px" width="18" height="18" viewBox="0 0 18 18"><path d="M2.4,15.6 C3,9 8,3 16,2.4" stroke="#1f8a1f" stroke-width="1.7" fill="none"/><rect x="1.2" y="14.4" width="2.4" height="2.4" fill="#2a62a8"/><rect x="14.8" y="1.2" width="2.4" height="2.4" fill="#2a62a8"/><rect x="4.8" y="6.2" width="2.4" height="2.4" fill="#2a62a8"/></svg>
<svg class="abs" style="left:406px;top:781px" width="16" height="16" viewBox="0 0 16 16"><circle cx="8" cy="8" r="6.6" fill="#e6eef8" stroke="#1f8a1f" stroke-width="1.1"/><circle cx="8" cy="8" r="1.7" fill="#1f8a1f"/></svg>
<svg class="abs" style="left:430px;top:780px" width="18" height="17" viewBox="0 0 18 17"><path d="M2,2 H9.6 L16,8.4 V15 H2Z" fill="#e3edf9" stroke="#1f8a1f" stroke-width="1.3"/><rect x="0.8" y="0.8" width="2.4" height="2.4" fill="#2a62a8"/><rect x="8.4" y="0.8" width="2.4" height="2.4" fill="#2a62a8"/><rect x="14.8" y="7.2" width="2.4" height="2.4" fill="#2a62a8"/><rect x="14.8" y="13.8" width="2.4" height="2.4" fill="#2a62a8"/><rect x="0.8" y="13.8" width="2.4" height="2.4" fill="#2a62a8"/></svg>
<svg class="abs" style="left:455px;top:781px" width="18" height="16" viewBox="0 0 18 16"><rect x="2" y="2" width="13.6" height="11.6" fill="#e3edf9" stroke="#1f8a1f" stroke-width="1.3"/><rect x="0.8" y="0.8" width="2.4" height="2.4" fill="#2a62a8"/><rect x="14.4" y="12.4" width="2.4" height="2.4" fill="#2a62a8"/></svg>
<svg class="abs" style="left:489px;top:755px" width="16" height="16" viewBox="0 0 16 16"><path d="M2,13.6 L13.6,2" stroke="#111" stroke-width="1.5"/><rect x="0.8" y="12.4" width="2.4" height="2.4" fill="#2a62a8"/><rect x="12.4" y="0.8" width="2.4" height="2.4" fill="#2a62a8"/></svg>
<svg class="abs" style="left:514px;top:755px" width="16" height="16" viewBox="0 0 16 16"><path d="M2,2 L6,13.6 L8.4,2.4 L13,13.6" stroke="#111" stroke-width="1.5" fill="none" stroke-linejoin="round"/><rect x="0.8" y="0.8" width="2.4" height="2.4" fill="#2a62a8"/><rect x="7.2" y="1.0000000000000002" width="2.4" height="2.4" fill="#2a62a8"/><rect x="4.8" y="12.4" width="2.4" height="2.4" fill="#2a62a8"/><rect x="11.8" y="12.4" width="2.4" height="2.4" fill="#2a62a8"/></svg>
<svg class="abs" style="left:538px;top:754px" width="18" height="18" viewBox="0 0 18 18"><path d="M2.4,15.6 C3,9 8,3 16,2.4" stroke="#444" stroke-width="1.6" fill="none"/><rect x="1.2" y="14.4" width="2.4" height="2.4" fill="#2a62a8"/><rect x="14.8" y="1.2" width="2.4" height="2.4" fill="#2a62a8"/><rect x="4.8" y="6.2" width="2.4" height="2.4" fill="#2a62a8"/></svg>
<svg class="abs" style="left:563px;top:755px" width="18" height="16" viewBox="0 0 18 16"><path d="M2.6,1.4 V13 M15.6,1.4 V13 M3.4,4.2 H14.8" stroke="#1f4f98" stroke-width="1.4" fill="none"/><path d="M3,4.2 L6,2.4 V6Z M15.2,4.2 L12.2,2.4 V6Z" fill="#1f4f98"/><rect x="1.4000000000000001" y="12.200000000000001" width="2.4" height="2.4" fill="#1f4f98"/><rect x="14.4" y="12.200000000000001" width="2.4" height="2.4" fill="#1f4f98"/></svg>
<div class="abs" style="left:584.5px;top:761px;width:0;height:0;border-left:2.5px solid transparent;border-right:2.5px solid transparent;border-top:3.5px solid #777"></div>
<svg class="abs" style="left:489px;top:781px" width="16" height="16" viewBox="0 0 16 16"><circle cx="8" cy="8" r="6.6" fill="#eef3fb" stroke="#3a5f9a" stroke-width="0.9"/><circle cx="8" cy="8" r="1.7" fill="#27497c"/></svg>
<svg class="abs" style="left:513px;top:780px" width="18" height="17" viewBox="0 0 18 17"><path d="M2,2 H9.6 L16,8.4 V15 H2Z" fill="#e6eefa" stroke="#5a7fb4" stroke-width="1.2"/><rect x="0.8" y="0.8" width="2.4" height="2.4" fill="#2a62a8"/><rect x="8.4" y="0.8" width="2.4" height="2.4" fill="#2a62a8"/><rect x="14.8" y="7.2" width="2.4" height="2.4" fill="#2a62a8"/><rect x="14.8" y="13.8" width="2.4" height="2.4" fill="#2a62a8"/><rect x="0.8" y="13.8" width="2.4" height="2.4" fill="#2a62a8"/></svg>
<svg class="abs" style="left:538px;top:781px" width="18" height="16" viewBox="0 0 18 16"><rect x="2" y="2" width="13.6" height="11.6" fill="#e6eefa" stroke="#5a7fb4" stroke-width="1.2"/><rect x="0.8" y="0.8" width="2.4" height="2.4" fill="#2a62a8"/><rect x="14.4" y="12.4" width="2.4" height="2.4" fill="#2a62a8"/></svg>
<svg class="abs" style="left:563px;top:780px" width="18" height="17" viewBox="0 0 18 17"><rect x="2" y="2.4" width="13.4" height="11.4" fill="#fff" stroke="#111" stroke-width="1.2"/><text x="8.8" y="12.4" font-size="10.5" text-anchor="middle" fill="#1a1a8a" font-family="Liberation Serif, serif">A</text><rect x="0.8" y="1.2" width="2.4" height="2.4" fill="#2a62a8"/><rect x="14.200000000000001" y="12.600000000000001" width="2.4" height="2.4" fill="#2a62a8"/></svg><style>
.sdd{height:14px;width:46px;border:1px solid #d4d6d9;border-radius:2px;background:linear-gradient(#e9e9e9 0,#dcdcdc 45%,#c9c9c9 50%,#d9d9d9 100%)}
.sdd:after{content:"";position:absolute;right:3px;top:6px;width:0;height:0;border-left:2.5px solid transparent;border-right:2.5px solid transparent;border-top:3.5px solid #444}
.hdr{font-size:11px;font-weight:bold;line-height:14px;color:#2b2b45;white-space:nowrap;letter-spacing:0.15px}
.cin{border:1px solid #b9bbbe;border-radius:2px;background:#efefef;box-shadow:inset 0 0 0 1px #f8f8f8}
.win{border:1px solid #c9d3e0;background:#fff;border-radius:1px;font-weight:bold;font-size:12px;text-align:right;padding-right:2px;color:#000}
.cbtn{border:1px solid #a4a8b0;border-radius:3px;background:linear-gradient(#fbfcfd 0,#f1f3f6 48%,#e3e6ea 52%,#eceef2 100%)}
</style>
<svg class="abs" style="left:601px;top:753px" width="17" height="13" viewBox="0 0 17 13"><path d="M10,2.6 H1.2 V10.8 H9" stroke="#222" stroke-width="1.1" fill="none"/><path d="M5.4,11.4 L6.6,8 L13,1.8 L15.2,4 L8.8,10.2Z" fill="#f3c448" stroke="#8a5a10" stroke-width="0.6"/><path d="M13,1.8 L14,0.9 Q15.4,0.7 16,1.9 Q16.2,3.1 15.2,4Z" fill="#e04a3a"/><path d="M5.4,11.4 L5.9,9.8 L7,10.8Z" fill="#222"/></svg>
<div class="abs hdr" id="hline" style="left:620px;top:753px">Line</div>
<div class="abs sdd" style="left:602px;top:769px"></div>
<svg class="abs" style="left:604px;top:770px" width="20" height="12" viewBox="0 0 20 12"><rect x="0.5" y="1.6" width="10.5" height="1" fill="#8e8e8e"/><rect x="0.5" y="4" width="10.5" height="2" fill="#8e8e8e"/><rect x="0.5" y="7.4" width="10.5" height="3.4" fill="#8e8e8e"/></svg>
<div class="abs sdd" style="left:652px;top:769px"></div>
<svg class="abs" style="left:654px;top:770px" width="20" height="12" viewBox="0 0 20 12"><path d="M1,2.6 H11" stroke="#8e8e8e" stroke-width="0.9"/><path d="M1,6 H11" stroke="#8e8e8e" stroke-width="1" stroke-dasharray="1.2,1"/><path d="M1,9.2 H11" stroke="#8e8e8e" stroke-width="1.2" stroke-dasharray="3,1.4"/></svg>
<div class="abs sdd" style="left:702px;top:769px"></div>
<svg class="abs" style="left:704px;top:770px" width="20" height="12" viewBox="0 0 20 12"><circle cx="6" cy="6" r="5.2" fill="#a6a6a6" stroke="#8c8c8c" stroke-width="0.6"/><path d="M6,6 L6,0.8 A5.2,5.2 0 0 1 10.6,8.4Z" fill="#cfcfcf"/><path d="M6,6 L1.4,8.4 A5.2,5.2 0 0 1 6,0.8Z" fill="#bdbdbd"/></svg>
<div class="abs sdd" style="left:602px;top:786px"></div>
<svg class="abs" style="left:604px;top:787px" width="20" height="12" viewBox="0 0 20 12"><circle cx="3.4" cy="6.4" r="2" fill="#8e8e8e"/><path d="M3,6.4 H10" stroke="#8e8e8e" stroke-width="1"/></svg>
<div class="abs sdd" style="left:652px;top:786px"></div>
<svg class="abs" style="left:654px;top:787px" width="20" height="12" viewBox="0 0 20 12"><circle cx="7.6" cy="6.4" r="2" fill="#8e8e8e"/><path d="M1.4,6.4 H8" stroke="#8e8e8e" stroke-width="1"/></svg>
<svg class="abs" style="left:761px;top:751px" width="17" height="15" viewBox="0 0 17 15"><path d="M3,8.4 L8.4,2.6 L13.2,7.6 L8,13.4Z" fill="#f4f8fe" stroke="#1f4f98" stroke-width="1.1" stroke-linejoin="round"/><path d="M7.2,1 C6,2.6 6.2,5.4 7.4,6.6" stroke="#1f4f98" stroke-width="1" fill="none"/><path d="M12.4,6.6 C14.6,7 15.6,9.4 14.8,12.4 C13.2,11.6 12.2,10 11.4,8Z" fill="#2a6fd8"/></svg>
<div class="abs hdr" id="hfill" style="left:780px;top:752px">Fill</div>
<div class="abs sdd" style="left:760px;top:769px"></div>
<svg class="abs" style="left:762px;top:770px" width="20" height="12" viewBox="0 0 20 12"><circle cx="6" cy="6" r="5.2" fill="#a6a6a6" stroke="#8c8c8c" stroke-width="0.6"/><path d="M6,6 L6,0.8 A5.2,5.2 0 0 1 10.6,8.4Z" fill="#cfcfcf"/><path d="M6,6 L1.4,8.4 A5.2,5.2 0 0 1 6,0.8Z" fill="#bdbdbd"/></svg>
<svg class="abs" style="left:818px;top:751px" width="17" height="15" viewBox="0 0 17 15"><text x="0" y="13" font-size="14.5" font-weight="bold" fill="#d8525a" font-family="Liberation Serif, serif">A</text><text x="9.6" y="9" font-size="11" fill="#7a6ae0" font-family="Liberation Sans, sans-serif">a</text></svg>
<div class="abs hdr" id="htext" style="left:836px;top:752px">Text</div>
<div class="abs sdd" style="left:818px;top:768px"></div>
<svg class="abs" style="left:820px;top:769px" width="20" height="12" viewBox="0 0 20 12"><circle cx="6" cy="6" r="5.2" fill="#a6a6a6" stroke="#8c8c8c" stroke-width="0.6"/><path d="M6,6 L6,0.8 A5.2,5.2 0 0 1 10.6,8.4Z" fill="#cfcfcf"/><path d="M6,6 L1.4,8.4 A5.2,5.2 0 0 1 6,0.8Z" fill="#bdbdbd"/></svg>
<div class="abs sdd" style="left:818px;top:785px"></div>
<svg class="abs" style="left:820px;top:786px" width="20" height="12" viewBox="0 0 20 12"><text x="0.5" y="10" font-size="10.5" fill="#8e8e8e" font-family="Liberation Serif, serif">A</text><path d="M10.4,1.4 L12.6,4.4 H8.2Z M10.4,10.6 L12.6,7.6 H8.2Z" fill="#8e8e8e"/></svg>
<svg class="abs" style="left:856px;top:806px" width="9" height="8" viewBox="0 0 9 8"><path d="M0.6,6 V0.6 H6" stroke="#777" stroke-width="1" fill="none"/><path d="M3,3 L7.6,7.2 M7.8,3.6 V7.4 H4" stroke="#666" stroke-width="1.1" fill="none"/></svg>
<div class="abs cbtn" style="left:872px;top:749px;width:24px;height:22px"></div>
<div class="abs win" style="left:895px;top:750px;width:49px;height:20px;line-height:20px">0</div>
<div class="abs cbtn" style="left:872px;top:772px;width:24px;height:22px"></div>
<div class="abs win" style="left:895px;top:773px;width:49px;height:20px;line-height:20px">0</div>
<svg class="abs" style="left:874px;top:750px" width="21" height="19" viewBox="0 0 21 19"><path d="M5,3 V15 M2.4,3 H7.6 M2.4,15 H7.6" stroke="#1f4f86" stroke-width="1.3"/><path d="M5,3.4 L7,6.2 H3Z M5,14.6 L7,11.8 H3Z" fill="#1f4f86"/><rect x="11.4" y="5.6" width="7" height="5.4" rx="0.8" fill="#f0c24a" stroke="#b88a1e" stroke-width="0.6"/><path d="M13.0,5.6 V3.9999999999999996 Q14.9,1.1999999999999993 16.8,3.9999999999999996 V5.6" stroke="#9c9c9c" stroke-width="1.3" fill="none"/></svg>
<svg class="abs" style="left:874px;top:773px" width="21" height="19" viewBox="0 0 21 19"><path d="M2,16 L9.4,4.6 L13.4,16Z" stroke="#1f4f86" stroke-width="1.3" fill="none"/><path d="M5.4,16 Q6.2,12.6 9,12.4" stroke="#1f4f86" stroke-width="1" fill="none"/><circle cx="8" cy="14.2" r="1" fill="none" stroke="#1f4f86" stroke-width="0.7"/><rect x="11.6" y="5.6" width="7" height="5.4" rx="0.8" fill="#f0c24a" stroke="#b88a1e" stroke-width="0.6"/><path d="M13.2,5.6 V3.9999999999999996 Q15.1,1.1999999999999993 17.0,3.9999999999999996 V5.6" stroke="#9c9c9c" stroke-width="1.3" fill="none"/></svg>
<svg class="abs" style="left:875px;top:796px" width="18" height="17" viewBox="0 0 18 17"><rect x="2" y="2" width="14" height="13.4" fill="#fff" stroke="#173a6e" stroke-width="1.3"/><rect x="0.6" y="0.6" width="2.6" height="2.6" fill="#2a62a8"/><path d="M4.4,5.6 h1.8 M7.6,5.6 h6.4 M4.4,8.8 h1.8 M7.6,8.8 h6.4 M4.4,12 h1.8 M7.6,12 h6.4" stroke="#173a6e" stroke-width="1.8"/></svg>
<div class="abs cin" style="left:896px;top:795px;width:48px;height:19px"></div>
<svg class="abs" style="left:952px;top:763px" width="18" height="18" viewBox="0 0 18 18"><path d="M2.4,16.6 L3.8,11.4 L11.4,3.8 L15.2,7.6 L7.6,15.2Z" fill="#f7d23a" stroke="#8a6a10" stroke-width="0.8"/><path d="M12,4 L13.2,2.8 Q15,2.2 16,3.6 Q16.8,5.4 15,7Z" fill="#e02a3a"/><path d="M11.4,4.8 L14.2,7.6" stroke="#c9c9c9" stroke-width="1.6"/><path d="M2.6,16.4 L3.4,14 L5,15.6Z" fill="#5a3a10"/><path d="M2.6,16.4 L4,12 L7,15Z" fill="#f0c79a" opacity="0.8"/><path d="M3.4,1 V7.4 M0.4,4.2 H6.6 M1.2,2 L5.6,6.4 M5.6,2 L1.2,6.4" stroke="#f0b428" stroke-width="0.9"/></svg>
<svg class="abs" style="left:980px;top:756px" width="16" height="12" viewBox="0 0 16 12"><path d="M1.6,1.4 V10.6 M1.6,6 H12" stroke="#1f4f86" stroke-width="1.5"/><path d="M15.2,6 L11,3.2 V8.8Z" fill="#1f4f86"/></svg>
<div class="abs cin" style="left:999px;top:752px;width:52px;height:20px"></div>
<svg class="abs" style="left:1056px;top:756px" width="18" height="12" viewBox="0 0 18 12"><path d="M1.4,1.6 V10.4 M16.4,1.6 V10.4 M3,6 H15" stroke="#1f4f86" stroke-width="1.4"/><path d="M2,6 L5.6,3.4 V8.6Z M15.8,6 L12.2,3.4 V8.6Z" fill="#1f4f86"/></svg>
<div class="abs cin" style="left:1076px;top:752px;width:52px;height:20px"></div>
<svg class="abs" style="left:983px;top:779px" width="10" height="16" viewBox="0 0 10 16"><path d="M1,14.4 H9 M5,14 V4" stroke="#1f4f86" stroke-width="1.5"/><path d="M5,0.6 L8,4.8 H2Z" fill="#1f4f86"/></svg>
<div class="abs cin" style="left:999px;top:777px;width:52px;height:20px"></div>
<svg class="abs" style="left:1060px;top:778px" width="10" height="18" viewBox="0 0 10 18"><path d="M1,1.6 H9 M1,16 H9 M5,3 V15" stroke="#1f4f86" stroke-width="1.4"/><path d="M5,2.2 L7.6,5.6 H2.4Z M5,15.4 L7.6,12 H2.4Z" fill="#1f4f86"/></svg>
<div class="abs cin" style="left:1076px;top:777px;width:52px;height:20px"></div>
<svg class="abs" style="left:1127px;top:758px" width="16" height="33" viewBox="0 0 16 33"><path d="M0,3.6 H12 V29.6 H0" stroke="#a9a9a9" stroke-width="3.2" fill="none"/></svg>
<div class="abs " style="left:1132px;top:768px;width:14px;height:14px;border:1px solid #c9ccd2;border-radius:2px;background:#fdfdfd"></div>
<svg class="abs" style="left:1134px;top:769px" width="10" height="12" viewBox="0 0 10 12"><rect x="1" y="5" width="8" height="5.8" rx="0.8" fill="#f0c040" stroke="#b8861a" stroke-width="0.7"/><path d="M2.8,5 V3.4 Q5,0.4 7.2,3.4 V5" stroke="#c9a23a" stroke-width="1.2" fill="none"/><path d="M2,8 H8" stroke="#d9a020" stroke-width="0.8"/></svg>
<svg class="abs" style="left:1151px;top:752px" width="47" height="47" viewBox="0 0 47 47"><path d="M1.2,28.6 V23.4 A22.2,22.2 0 0 1 45.6,23.4 V28.6Z" fill="#f3f3f3" stroke="#9c9c9c" stroke-width="1"/><path d="M1.6,23.4 H5 M42,23.4 H45.4 M7.8,7.6 L10,9.8 M39,7.6 L36.8,9.8" stroke="#666" stroke-width="0.9"/><path d="M23.4,9 V23.4" stroke="#8a8a8a" stroke-width="1"/><circle cx="23.4" cy="6.2" r="3.6" fill="#a9abb4" stroke="#7a7c86" stroke-width="0.9"/><rect x="1.2" y="28.4" width="44.4" height="17" fill="#fff" stroke="#b4b4b4" stroke-width="1"/><text x="23.4" y="41.4" font-size="12" font-weight="bold" text-anchor="middle" fill="#000" font-family="Liberation Sans, sans-serif">0.0</text></svg>
<svg class="abs" style="left:1201px;top:764px" width="19" height="34" viewBox="0 0 19 34"><rect x="0.8" y="0.8" width="24" height="32.4" rx="1.5" fill="#e9e9e9" stroke="#c2c2c2" stroke-width="1"/><path d="M12.4,1 V33 M1,11.4 H19 M1,22.4 H19" stroke="#c2c2c2" stroke-width="1"/></svg><!-- title icon -->
<svg class="abs" style="left:10px;top:9px" width="17" height="18" viewBox="0 0 17 18"><path d="M8,0.5 H16.5 V17 H8 A8,8.25 0 0 1 8,0.5Z" fill="#0b4a7e"/><text x="9.3" y="12.6" font-size="10" font-weight="bold" fill="#fff" text-anchor="middle" font-family="Liberation Sans, sans-serif" textLength="12" lengthAdjust="spacingAndGlyphs">BT</text></svg>
<!-- window buttons -->
<style>
.wb{top:10px;height:17px;border:1px solid #66799a;border-radius:3px;background:linear-gradient(#d3e0f0 0,#bccfe6 45%,#9fb8d6 50%,#b4cae4 100%);box-shadow:inset 0 0 0 1px rgba(255,255,255,.55)}
.wbc{border-color:#43141c;background:linear-gradient(#eab3a8 0,#dd8b7a 45%,#c54527 50%,#d9795c 100%);box-shadow:inset 0 0 0 1px rgba(255,255,255,.35)}
</style>
<div class="abs wb" style="left:1066px;width:31px"></div>
<svg class="abs" style="left:1073px;top:12px" width="18" height="12" viewBox="0 0 18 12"><rect x="0.5" y="0.5" width="13" height="10" fill="#e8eef6" stroke="#4c5a6e"/><rect x="2" y="2" width="3" height="7" fill="#8d9db3"/><rect x="6" y="2" width="3" height="7" fill="#8d9db3"/><rect x="10.5" y="3.5" width="6" height="5" fill="#fff" stroke="#4c5a6e"/><rect x="12" y="5" width="3" height="2" fill="#5c6a80"/></svg>
<div class="abs wb" style="left:1121px;width:31px"></div>
<div class="abs" style="left:1131px;top:18px;width:11px;height:5px;background:#fff;border:1px solid #6a7486;border-radius:1px"></div>
<div class="abs wb" style="left:1154px;width:31px"></div>
<div class="abs" style="left:1164px;top:14px;width:11px;height:9px;background:#fff;border:1px solid #6a7486;border-radius:1px"></div>
<div class="abs" style="left:1167px;top:17px;width:5px;height:3px;background:#a9bdd6;border:1px solid #555f70"></div>
<div class="abs wb wbc" style="left:1187px;width:31px"></div>
<svg class="abs" style="left:1195px;top:12px" width="15" height="13" viewBox="0 0 15 13"><path d="M2,2 L5,2 L7.5,4.6 L10,2 L13,2 L9.4,6.3 L13,10.8 L10,10.8 L7.5,8 L5,10.8 L2,10.8 L5.6,6.3 Z" fill="#fff" stroke="#5a4a52" stroke-width="0.9" stroke-linejoin="round"/></svg>
<!-- TOOLBAR ICONS -->
<style>.dd{width:0;height:0;border-left:3px solid transparent;border-right:3px solid transparent;border-top:4px solid #4b5b8c}</style>
<!-- new -->
<svg class="abs" style="left:15px;top:62px" width="17" height="17" viewBox="0 0 17 17"><path d="M4.5,3.5 H11 L14.5,7 V16.2 H4.5Z" fill="#fdfdff" stroke="#2d3a5c" stroke-width="1"/><path d="M11,3.5 V7 H14.5" fill="#dfe6f2" stroke="#2d3a5c" stroke-width="0.8"/><path d="M6,15 H13.5 V9" stroke="#b9c6de" fill="none"/><circle cx="4.6" cy="4.8" r="3.8" fill="#ffd21e"/><circle cx="4.6" cy="4.8" r="3.8" fill="none" stroke="#ff8a1a" stroke-width="1.3" stroke-dasharray="1.3,1.1"/><circle cx="4.6" cy="4.8" r="1.4" fill="#fff3a0"/></svg>
<!-- open -->
<svg class="abs" style="left:37px;top:63px" width="18" height="16" viewBox="0 0 18 16"><path d="M1,14.5 V4 H5.5 L7,5.5 H12 V8" fill="#d9b45a" stroke="#a07c22" stroke-width="0.8"/><path d="M5.5,7 L9,1.5 L14.5,5 L12,9Z" fill="#f4f6fa" stroke="#8a96ac" stroke-width="0.8"/><path d="M1,14.5 L4.5,7.5 H17 L13.5,14.5Z" fill="#f8c44c" stroke="#b0861e" stroke-width="0.8"/><path d="M5,8.4 H15.6" stroke="#fde39a" stroke-width="0.9"/></svg>
<!-- save -->
<svg class="abs" style="left:62px;top:64px" width="15" height="15" viewBox="0 0 15 15"><rect x="0.5" y="0.5" width="14" height="14" rx="1" fill="#4a4ad0" stroke="#2a2a86"/><rect x="3" y="1" width="9" height="6.5" fill="#f2f4fb"/><rect x="3" y="1" width="9" height="2" fill="#cdd3ec"/><rect x="3.5" y="9.5" width="8" height="5" fill="#23235e"/><rect x="5" y="10.5" width="3" height="3.5" fill="#e4e4ee"/></svg>
<!-- undo -->
<svg class="abs" style="left:101px;top:63px" width="15" height="16" viewBox="0 0 15 16"><path d="M1.2,4.8 L6.8,1.8 L6.2,4.2 C10.5,3.2 13.6,6 12.6,10 C12,12.4 10.2,14 7.6,14.6 C9.8,12.8 10.6,10.6 9.9,8.8 C9.3,7.2 7.6,6.8 5.6,7.4 L5.2,9.6 Z" fill="#3f79de" stroke="#2b5cc0" stroke-width="0.6" stroke-linejoin="round"/></svg>
<div class="abs dd" style="left:121px;top:70px"></div>
<!-- redo -->
<svg class="abs" style="left:132px;top:63px" width="15" height="16" viewBox="0 0 15 16"><path d="M13.8,4.8 L8.2,1.8 L8.8,4.2 C4.5,3.2 1.4,6 2.4,10 C3,12.4 4.8,14 7.4,14.6 C5.2,12.8 4.4,10.6 5.1,8.8 C5.7,7.2 7.4,6.8 9.4,7.4 L9.8,9.6 Z" fill="#a9adb4" stroke="#8e9299" stroke-width="0.6" stroke-linejoin="round"/></svg>
<div class="abs dd" style="left:153px;top:70px;border-top-color:#a6a9b2"></div>
<!-- subject -->
<svg class="abs" style="left:177px;top:62px" width="17" height="17" viewBox="0 0 17 17"><rect x="2.6" y="1.6" width="13.2" height="13.8" rx="1.2" fill="#f2f8ff" stroke="#1d2a55" stroke-width="1.3"/><path d="M7,2.4 V14.8 M11.4,2.4 V14.8 M3.4,6.2 H15.2 M3.4,10.6 H15.2" stroke="#2a78d6" stroke-width="1.15"/><rect x="3.6" y="2.6" width="11.2" height="11.8" fill="none" stroke="#5a9ae6" stroke-width="0.8"/><path d="M1,3 H3 M1,5 H3 M1,7 H3 M1,9 H3 M1,11 H3 M1,13 H3 M1,15 H3" stroke="#1d2a55" stroke-width="0.9"/></svg>
<div class="abs tt" style="left:196px;letter-spacing:-0.5px">Subject</div>
<div class="abs dd" style="left:243px;top:70px"></div>
<!-- piece -->
<svg class="abs" style="left:272px;top:64px" width="31" height="15" viewBox="0 0 31 15"><rect x="1" y="1" width="29" height="12.5" fill="#c3d3ec" stroke="#6f86b4" stroke-width="1"/><path d="M10,1 L20,13.5 M20,1 L10,13.5" stroke="#7f95be" stroke-width="0.9"/></svg>
<div class="abs tt" style="left:304px;letter-spacing:-0.5px">Piece</div>
<div class="abs dd" style="left:345px;top:70px"></div>
<!-- weld -->
<svg class="abs" style="left:355px;top:62px" width="19" height="18" viewBox="0 0 19 18"><path d="M1,1.5 H14 L9.2,8.5 V10 L13.5,16.5 H1.5 L6,10 V8.5Z" fill="#c7dcf0" stroke="#7d9cc0" stroke-width="0.9"/><path d="M8,14.2 L9,10.8 L15.2,4.2 L17.6,6.4 L11.4,13Z" fill="#f5b93a" stroke="#9a6a14" stroke-width="0.7"/><path d="M15.2,4.2 L16.4,3 Q17.6,2.4 18.4,3.6 Q18.8,4.8 17.6,6.4Z" fill="#e0302a"/><path d="M8,14.2 L8.5,12.4 L9.7,13.6Z" fill="#333"/></svg>
<div class="abs tt" style="left:374px;letter-spacing:-0.5px">Weld</div>
<!-- instrument -->
<svg class="abs" style="left:428px;top:62px" width="17" height="17" viewBox="0 0 17 17"><rect x="0.5" y="0.5" width="16" height="16" rx="1" fill="#c9c6bd" stroke="#9a978e"/><rect x="5.5" y="2" width="9.5" height="12.5" fill="#141a7a"/><path d="M7,3.5 V12.5 H10 V9.5 H11 V12.5 H14" stroke="#ffe228" stroke-width="1.1" fill="none"/><path d="M2.5,3.5 h1.6 M2.5,6.5 h1.6 M2.5,9.5 h1.6" stroke="#1a1ad8" stroke-width="1.6"/></svg>
<div class="abs tt" style="left:447px;letter-spacing:0.1px">Instrument</div>
<div class="abs dd" style="left:521px;top:70px"></div>
<!-- probe -->
<svg class="abs" style="left:531px;top:62px" width="18" height="18" viewBox="0 0 18 18"><path d="M5.5,9 L13,6.5 L16.5,9.5 V16.5 H5.5Z" fill="#d6e6fa" stroke="#2c4f86" stroke-width="1"/><path d="M6.5,7.8 L11,5.4 L13.6,8.4 L9,10.6Z" fill="#3c86dc" stroke="#1f4f98" stroke-width="0.7"/><path d="M4.2,0.8 V7.6 M0.8,4.2 H7.6" stroke="#2f9a36" stroke-width="2.4"/></svg>
<div class="abs tt" style="left:550px;letter-spacing:-0.35px">Probe</div>
<div class="abs dd" style="left:590px;top:70px"></div>
<!-- note pencil -->
<svg class="abs" style="left:619px;top:63px" width="18" height="16" viewBox="0 0 18 16"><rect x="0.8" y="1.5" width="14" height="11" fill="#fbfcff" stroke="#7aa0d6" stroke-width="0.9"/><rect x="0.8" y="1.5" width="14" height="2.6" fill="#a9c6ee"/><path d="M2.5,6.5 h3 M2.5,9.2 h3 M7,6.5 h3.5" stroke="#5b8ed6" stroke-width="1.2"/><path d="M5.6,15 L6.8,11.4 L13.4,5.2 L16.2,7.8 L9.4,14Z" fill="#f3b54a" stroke="#a06e18" stroke-width="0.7"/><path d="M5.6,15 L6.2,13.2 L7.5,14.4Z" fill="#333"/><path d="M13.4,5.2 L14.6,4.2 Q16,3.8 16.9,5 Q17.4,6.4 16.2,7.8Z" fill="#f0c9a0" stroke="#a06e18" stroke-width="0.5"/></svg>
<!-- green notebook -->
<svg class="abs" style="left:642px;top:62px" width="17" height="18" viewBox="0 0 17 18"><rect x="2.8" y="1" width="13" height="15.5" rx="1" fill="#36b24a" stroke="#0e4a1a" stroke-width="1.1"/><rect x="6" y="3.2" width="7.5" height="3.4" fill="#8ee096" stroke="#17702a" stroke-width="0.7"/><path d="M11,12.8 h3" stroke="#0e4a1a" stroke-width="1.2"/><path d="M1.2,2.6 h2.6 M1.2,4.6 h2.6 M1.2,6.6 h2.6 M1.2,8.6 h2.6 M1.2,10.6 h2.6 M1.2,12.6 h2.6 M1.2,14.6 h2.6" stroke="#222" stroke-width="0.9"/></svg>
<!-- grid red dots -->
<svg class="abs" style="left:665px;top:62px" width="18" height="18" viewBox="0 0 18 18"><rect x="1" y="1" width="16" height="16" fill="#fdfdff" stroke="#7ea2da" stroke-width="1"/><rect x="1" y="1" width="16" height="2.4" fill="#9fbdea"/><path d="M7.2,3 V17 M12.4,3 V17 M1,8 H17 M1,12.6 H17" stroke="#2d6fd0" stroke-width="1.2"/><circle cx="6.6" cy="6.8" r="2.5" fill="#e02a1e"/><circle cx="6.6" cy="6.8" r="1" fill="#1c8a1c"/><circle cx="11.8" cy="12.6" r="2.5" fill="#e02a1e"/><circle cx="11.8" cy="12.6" r="1" fill="#1c8a1c"/></svg>
<!-- camera -->
<svg class="abs" style="left:687px;top:63px" width="18" height="16" viewBox="0 0 18 16"><rect x="0.8" y="3.2" width="16.4" height="11" rx="1.4" fill="#5b5f66" stroke="#2a2c30" stroke-width="0.9"/><rect x="0.8" y="4.6" width="3.2" height="8.4" fill="#c9ccd2"/><rect x="5" y="1.4" width="6" height="2.6" fill="#8a8e96" stroke="#2a2c30" stroke-width="0.7"/><circle cx="10.4" cy="9" r="4.1" fill="#2c2f36" stroke="#d0d3d8" stroke-width="0.9"/><circle cx="10.4" cy="9" r="2.2" fill="#3a58b8"/><circle cx="9.6" cy="8.2" r="0.8" fill="#cfe0ff"/><rect x="13.6" y="4.4" width="2.4" height="1.4" fill="#e8e8e8"/></svg>
<div class="abs dd" style="left:708px;top:70px"></div>
<!-- animations button -->
<div class="abs" style="left:734px;top:60px;width:93px;height:22px;border:1px solid #b4c0da;border-bottom-color:#e9b656;border-right:none;border-radius:3px 0 0 0;background:linear-gradient(#fdf0c2 0,#fde39a 45%,#fbd267 50%,#fce08f 100%)"></div>
<div class="abs" style="left:826px;top:60px;width:11px;height:22px;border:1px solid #e0953a;border-radius:0 3px 0 0;background:linear-gradient(#fbc77a 0,#f8a94a 50%,#f59a30 55%,#f9b45c 100%)"></div>
<svg class="abs" style="left:740px;top:63px" width="12" height="16" viewBox="0 0 12 16"><path d="M1,0.8 L11,8 L1,15.2Z" fill="#2c9a2c" stroke="#1c7a1c" stroke-width="0.6"/></svg>
<div class="abs tt" style="left:755px;letter-spacing:-0.13px">Animations</div>
<div class="abs dd" style="left:829px;top:70px;border-top-color:#5a5a8a"></div>
<!-- right icons -->
<svg class="abs" style="left:956px;top:62px" width="17" height="18" viewBox="0 0 17 18"><rect x="1" y="1.6" width="14" height="2.2" fill="#5a7fc4"/><rect x="1" y="3.8" width="14" height="2" fill="#9fb4da"/><rect x="1" y="5.8" width="14" height="2" fill="#c6cfdf"/><rect x="1" y="7.8" width="14" height="8.6" fill="#fff"/><path d="M1,16.6 H15 M1,8 V16.6 M15,8 V16.6" stroke="#777" stroke-width="0.7" stroke-dasharray="1,1"/><path d="M8,8.4 L12.4,12.6 H9.6 V15.6 H6.4 V12.6 H3.6Z" fill="#1e8a2a"/></svg>
<div class="abs dd" style="left:973px;top:70px;border-left-width:2.5px;border-right-width:2.5px"></div>
<style>.sel{border:1px solid #eeb04a;border-radius:2px;background:linear-gradient(#f9cf8c,#fbdca0 40%,#fcd27c)}</style>
<div class="abs sel" style="left:996px;top:60px;width:23px;height:22px"></div>
<svg class="abs" style="left:999px;top:62px" width="18" height="18" viewBox="0 0 18 18"><path d="M1,5.5 L5.5,1 H17 V12.5 L12.5,17 H1Z" fill="#eaf2fc" stroke="#27497c" stroke-width="1"/><path d="M12.5,5.5 L17,1 M12.5,5.5 V17 M1,5.5 H12.5" stroke="#27497c" stroke-width="0.9" fill="none"/><rect x="1.5" y="6" width="10.6" height="10.6" fill="#2f62a4"/><path d="M1.6,5.2 L5.7,1.4 H16.2 L12.4,5.2Z" fill="#d5e4f6"/><path d="M13,5.8 L16.6,2 V12.2 L13,16Z" fill="#a9c4e4"/></svg>
<svg class="abs" style="left:1022px;top:62px" width="18" height="18" viewBox="0 0 18 18"><path d="M1,5.5 L5.5,1 H17 V12.5 L12.5,17 H1Z" fill="#f3f8fe" stroke="#27497c" stroke-width="1"/><path d="M1.6,5.2 L5.7,1.4 H16.2 L12.4,5.2Z" fill="#2f62a4"/><path d="M12.5,5.5 L17,1 M12.5,5.5 V17 M1,5.5 H12.5" stroke="#27497c" stroke-width="0.9" fill="none"/><path d="M5.5,1 V12.5 H17 M5.5,12.5 L1,17" stroke="#7d9cc6" stroke-width="0.8" fill="none"/><path d="M2,16 L12,6 V16.5Z" fill="#cfe0f4" opacity="0.7"/></svg>
<svg class="abs" style="left:1045px;top:62px" width="18" height="18" viewBox="0 0 18 18"><path d="M1,5.5 L5.5,1 H17 V12.5 L12.5,17 H1Z" fill="#f6fafe" stroke="#5478ac" stroke-width="1"/><path d="M12.5,5.5 L17,1 M12.5,5.5 V17 M1,5.5 H12.5" stroke="#5478ac" stroke-width="0.9" fill="none"/><path d="M5.5,1 V12.5 H17 M5.5,12.5 L1,17" stroke="#8aa8d0" stroke-width="0.8" fill="none"/><path d="M2,16 L12,6 V16.5Z" fill="#cfe0f4" opacity="0.6"/></svg>
<div class="abs sel" style="left:1079px;top:60px;width:23px;height:22px"></div>
<svg class="abs" style="left:1081px;top:61px" width="19" height="20" viewBox="0 0 19 20"><path d="M5.2,19 C4,15.5 1.4,13.4 1.2,11.2 C1.2,10 2.6,9.8 3.6,10.8 L5.2,12.8 V4.4 C5.2,3 7.2,3 7.4,4.4 V3 C7.6,1.4 9.8,1.4 10,3 V3.6 C10.2,2.2 12.4,2.2 12.6,3.8 V5.2 C13,4 15,4.2 15,5.8 V12.6 C15,15.2 14.2,17 13.4,19Z" fill="#fff" stroke="#222" stroke-width="0.9" stroke-linejoin="round"/><path d="M7.4,4.4 V9.4 M10,3.6 V9.4 M12.6,5.2 V9.6" stroke="#222" stroke-width="0.8"/></svg>
<!-- pan zoom -->
<svg class="abs" style="left:1105px;top:61px" width="19" height="20" viewBox="0 0 19 20"><path d="M12.5,13.5 L16.6,17.8" stroke="#d9a030" stroke-width="2.6" stroke-linecap="round"/><circle cx="8.4" cy="9.2" r="6.6" fill="#e9f1fb" stroke="#7d8ea8" stroke-width="1.1"/><path d="M8.4,3.6 V14.8 M2.8,9.2 H14" stroke="#1c4fa8" stroke-width="1.3"/><path d="M8.4,2.6 L10.2,5 H6.6Z M8.4,15.8 L10.2,13.4 H6.6Z M1.8,9.2 L4.2,7.4 V11Z M15,9.2 L12.6,7.4 V11Z" fill="#1c4fa8"/></svg>
<svg class="abs" style="left:1128px;top:61px" width="19" height="20" viewBox="0 0 19 20"><path d="M11.4,12.4 L16.4,17.4" stroke="#d9a030" stroke-width="2.8" stroke-linecap="round"/><circle cx="7.6" cy="8.2" r="5.8" fill="#e9f1fb" stroke="#7d8ea8" stroke-width="1.2"/><rect x="4.6" y="5.2" width="6" height="6" fill="#fff" stroke="#3a4a68" stroke-width="1.1"/></svg>
<svg class="abs" style="left:1151px;top:61px" width="19" height="20" viewBox="0 0 19 20"><path d="M11.4,12.4 L16.4,17.4" stroke="#d9a030" stroke-width="2.8" stroke-linecap="round"/><circle cx="7.6" cy="8.2" r="5.8" fill="#eef4fc" stroke="#7d8ea8" stroke-width="1.2"/><circle cx="5.2" cy="6" r="1.2" fill="#1a1ae8"/><circle cx="10" cy="6" r="1.2" fill="#1a1ae8"/><circle cx="5.2" cy="10.6" r="1.2" fill="#1a1ae8"/><circle cx="10" cy="10.6" r="1.2" fill="#1a1ae8"/><circle cx="7.6" cy="8.3" r="1" fill="#1a1ae8"/></svg>
<svg class="abs" style="left:1174px;top:61px" width="19" height="20" viewBox="0 0 19 20"><path d="M11.4,12.4 L16.4,17.4" stroke="#d9a030" stroke-width="2.8" stroke-linecap="round"/><circle cx="7.6" cy="8.2" r="5.8" fill="#e9f1fb" stroke="#7d8ea8" stroke-width="1.2"/><path d="M7.6,4.8 V11.6 M4.2,8.2 H11" stroke="#24407c" stroke-width="1.8"/></svg>
<svg class="abs" style="left:1197px;top:61px" width="19" height="20" viewBox="0 0 19 20"><path d="M11.4,12.4 L16.4,17.4" stroke="#d9a030" stroke-width="2.8" stroke-linecap="round"/><circle cx="7.6" cy="8.2" r="5.8" fill="#e9f1fb" stroke="#7d8ea8" stroke-width="1.2"/><path d="M4.2,8.2 H11" stroke="#24407c" stroke-width="1.8"/></svg>

</body></html>
